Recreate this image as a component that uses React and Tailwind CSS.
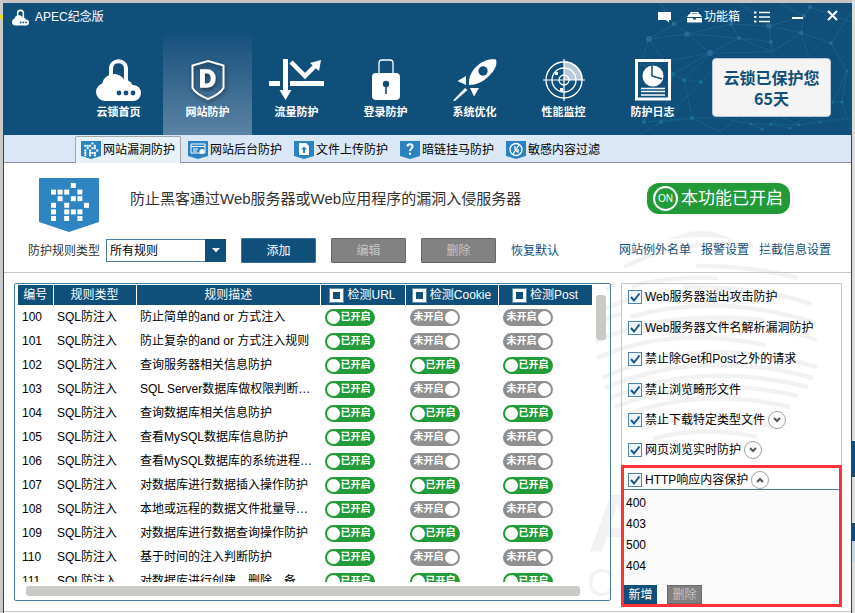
import React, { useState } from 'react'

const NAV = [
    { label: '云锁首页', icon: CloudLock },
    { label: '网站防护', icon: ShieldD },
    { label: '流量防护', icon: Flow },
    { label: '登录防护', icon: Padlock },
    { label: '系统优化', icon: Rocket },
    { label: '性能监控', icon: Radar },
    { label: '防护日志', icon: Report },
]

const TABS = [
    { label: '网站漏洞防护', icon: <PixelGlyph /> },
    {
        label: '网站后台防护',
        icon: (
            <>
                <path d="M3 3H17V12H3Z" fill="none" stroke="#fff" strokeWidth="1" />
                <path d="M3 5.500H17M5 8H10M5 10H9" stroke="#fff" strokeWidth="1" />
                <circle cx="14" cy="10.500" r="2.500" fill="#fff" />
            </>
        ),
    },
    {
        label: '文件上传防护',
        icon: (
            <>
                <path d="M5 2H12L15 5V14H5Z" fill="#fff" />
                <path d="M10 5.500L7 8.500H9V12H11V8.500H13Z" fill="#2b82c1" />
            </>
        ),
    },
    {
        label: '暗链挂马防护',
        icon: (
            <>
                <path d="M7.500 5.500C7.500 2.500 12.500 2.500 12.500 5.500C12.500 8 10 7.500 10 10" fill="none" stroke="#fff" strokeWidth="2" />
                <circle cx="10" cy="12.700" r="1.200" fill="#fff" />
            </>
        ),
    },
    {
        label: '敏感内容过滤',
        icon: (
            <>
                <circle cx="10" cy="8.500" r="6" fill="none" stroke="#fff" strokeWidth="1.300" />
                <path d="M13 4L7 13M9 5V9L12 11V8" fill="none" stroke="#fff" strokeWidth="1.300" />
            </>
        ),
    },
]

const RULES = [
    [100, '防止简单的and or 方式注入', true, false, false],
    [101, '防止复杂的and or 方式注入规则', true, false, false],
    [102, '查询服务器相关信息防护', true, true, true],
    [103, 'SQL Server数据库做权限判断的防护', true, false, false],
    [104, '查询数据库相关信息防护', true, true, true],
    [105, '查看MySQL数据库信息防护', true, false, false],
    [106, '查看MySQL数据库的系统进程的防护', true, false, false],
    [107, '对数据库进行数据插入操作防护', true, true, true],
    [108, '本地或远程的数据文件批量导入防护', true, false, false],
    [109, '对数据库进行数据查询操作防护', true, true, true],
    [110, '基于时间的注入判断防护', true, false, false],
    [111, '对数据库进行创建，删除，备', true, true, true],
]

const OPTIONS = ['Web服务器溢出攻击防护', 'Web服务器文件名解析漏洞防护', '禁止除Get和Post之外的请求', '禁止浏览畸形文件']
const MORE_OPTIONS = ['禁止下载特定类型文件', '网页浏览实时防护']
const CODES = [400, 403, 500, 404]

function CloudLock({ className = 'w-[45px] h-[42px]' }) {
    return (
        <svg className={className} viewBox="0 0 45 42">
            <path d="M15 24V10C15 -0.500 30 -0.500 30 10V24" fill="none" stroke="#fff" strokeWidth="4" />
            <g fill="#fff">
                <circle cx="9" cy="33" r="9" />
                <circle cx="18" cy="27" r="12" />
                <circle cx="29" cy="29" r="8" />
                <circle cx="37" cy="34" r="8" />
                <rect x="9" y="28" width="28" height="14" />
            </g>
            <g fill="#114f7b">
                <circle cx="23" cy="34" r="2.400" />
                <circle cx="30" cy="34" r="2.400" />
                <circle cx="37" cy="34" r="2.400" />
            </g>
        </svg>
    )
}

function ShieldD() {
    return (
        <svg className="w-[45px] h-[42px] drop-shadow-[1px_2px_2px_rgba(0,0,0,0.5)]" viewBox="0 0 45 42">
            <path d="M23 2L38.500 6.500V29Q35 35 23 40Q11 35 7.500 29V6.500Z" fill="none" stroke="#fff" strokeWidth="2" />
            <text x="22.500" y="28" textAnchor="middle" fill="#fff" stroke="#fff" strokeWidth="1.500" fontSize="23" fontWeight="700" fontFamily="Liberation Sans">D</text>
        </svg>
    )
}

function Flow() {
    return (
        <svg className="w-[55px] h-[42px]" viewBox="0 0 55 42">
            <g fill="#fff">
                <path d="M14 0H19V31H22.500L16.500 41L10.500 31H14Z" />
                <path d="M0 22H11V27H0ZM21 22H55V27H21Z" />
                <path d="M52 1L50 12L41 4Z" />
            </g>
            <path d="M22 3L36 17L47 6" fill="none" stroke="#fff" strokeWidth="4.500" />
        </svg>
    )
}

function Padlock() {
    return (
        <svg className="w-[28px] h-[42px]" viewBox="0 0 28 42">
            <path d="M7 15V4Q7 1 10 1H18Q21 1 21 4V15" fill="none" stroke="#fff" strokeWidth="1.300" />
            <rect y="14" width="28" height="27" rx="4" fill="#fff" />
            <circle cx="14" cy="25" r="3.200" fill="#114f7b" />
            <path d="M14 26V35" stroke="#114f7b" strokeWidth="1.600" />
        </svg>
    )
}

function Rocket() {
    return (
        <svg className="w-[44px] h-[42px]" viewBox="0 0 44 42">
            <path fill="#fff" d="M43 0.500C36 -0.500 29 2 23 8C18 13 15.500 19 16 26C23 26 30 23 36 17C42 11 44.500 6 43 0.500Z" />
            <circle cx="30" cy="12" r="4.700" fill="#114f7b" />
            <path fill="#fff" d="M4.500 22L13 17V26ZM17 29H26L21 37.500ZM0 41.500L12 29L14.500 31L2 42Z" />
        </svg>
    )
}

function Radar() {
    return (
        <svg className="w-[42px] h-[42px]" viewBox="0 0 42 42">
            <path d="M21 21V2A19 19 0 0 1 40 21Z" fill="#fff" opacity="0.700" />
            <g fill="none" stroke="#fff" strokeWidth="1.300">
                <circle cx="21" cy="21" r="18" />
                <circle cx="21" cy="21" r="12" />
                <circle cx="21" cy="21" r="5" />
                <path d="M21 0V42M0 21H42" strokeWidth="1.200" />
            </g>
            <path d="M12 13H15V16H12ZM17 29H20V32H17Z" fill="#fff" />
        </svg>
    )
}

function Report() {
    return (
        <svg className="w-[36px] h-[42px]" viewBox="0 0 36 42">
            <path d="M1.500 1.500H34.500V40H1.500Z" fill="none" stroke="#fff" strokeWidth="3" />
            <circle cx="18" cy="17" r="10.500" fill="#fff" />
            <path d="M17 6V17L27 20" fill="none" stroke="#114f7b" strokeWidth="1.500" />
            <path d="M6 29.500H30M6 32.500H30M6 36H30" stroke="#fff" strokeWidth="1.500" />
        </svg>
    )
}

const PIXELS = [[3, 0], [0, 1], [1, 1], [2, 1], [4, 1], [1, 2], [3, 2], [4, 2], [0, 3], [2, 3], [5, 3], [0, 4], [2, 4], [3, 4], [4, 4], [0, 5], [2, 5], [4, 5]]

function PixelGlyph() {
    return (
        <g transform="translate(-1 0) scale(0.36)" fill="#fff">
            {PIXELS.map(([x, y]) => (
                <rect key={`${x}-${y}`} x={12 + x * 6.6} y={4 + y * 6.6} width="5.6" height="5.6" />
            ))}
        </g>
    )
}

function Network() {
    return (
        <svg className="absolute right-0 top-0 w-[211px] h-[132px]" viewBox="640 3 211 132">
            <g fill="none" strokeWidth="0.800">
                <path stroke="#235f8c" d="M649 39L674 24L687 34L739 38L731 24L769 26L801 33L831 43L847 71M674 24L700 8L731 24L687 34L710 53L739 38L771 42L769 26L804 16L801 33L772 52L771 42M804 16L810 7L851 22M801 33L820 90M831 43L851 12M649 39L640 66L710 53L772 52M687 34L649 39L673 74M739 38L772 52M769 26L740 3M674 24L660 3M804 16L780 3" />
                <path stroke="#17638a" d="M673 74L710 53L684 80L673 74L661 122L701 82L684 80L692 118L644 122L673 74M701 82L712 70M692 118L720 118L751 124L771 124L799 125L820 122L833 102L842 102L847 71L833 102M842 102L851 130M799 125L780 116L771 124L762 129L751 124L740 116L720 132L692 118L661 122L640 134M820 122L806 116L790 128L771 124M820 122L851 118" />
            </g>
            <g fill="#2b689c">
                <circle cx="649" cy="39" r="3" />
                <circle cx="674" cy="24" r="2.300" />
                <circle cx="687" cy="34" r="2.600" />
                <circle cx="739" cy="38" r="2" />
                <circle cx="731" cy="24" r="2" />
                <circle cx="769" cy="26" r="2.800" />
                <circle cx="801" cy="33" r="2" />
                <circle cx="831" cy="43" r="2" />
                <circle cx="804" cy="16" r="2" />
                <circle cx="810" cy="7" r="2" />
                <circle cx="771" cy="42" r="2" />
                <circle cx="710" cy="53" r="3" />
            </g>
            <g fill="#15728f">
                <circle cx="673" cy="74" r="2" />
                <circle cx="684" cy="80" r="2" />
                <circle cx="701" cy="82" r="2" />
                <circle cx="692" cy="118" r="2" />
                <circle cx="644" cy="122" r="2" />
                <circle cx="661" cy="122" r="2" />
                <circle cx="751" cy="124" r="1.600" />
                <circle cx="771" cy="124" r="1.600" />
                <circle cx="799" cy="125" r="1.600" />
                <circle cx="790" cy="128" r="1.600" />
                <circle cx="762" cy="129" r="1.600" />
                <circle cx="820" cy="122" r="1.600" />
                <circle cx="833" cy="102" r="1.600" />
                <circle cx="842" cy="102" r="1.600" />
                <circle cx="847" cy="71" r="1.600" />
            </g>
        </svg>
    )
}

function Watermark() {
    return (
        <div aria-hidden="true" className="absolute right-0 top-0 w-[271px] h-[448px] overflow-hidden text-[#f2f2f2]">
            <svg className="absolute inset-0 w-[271px] h-[448px]" viewBox="580 163 271 448">
                <path d="M668 240Q700 222 734 240Q700 234 668 240Z" fill="currentColor" />
                <g fill="none" stroke="currentColor" strokeWidth="4.500">
                    <path d="M624 267Q680 238 753 246" />
                    <path d="M696 266Q750 265 798 278" />
                    <path d="M632 286Q670 276 718 278" />
                    <path d="M683 287Q760 286 811 304" />
                    <path d="M606 308Q660 284 730 296" />
                    <path d="M606 290L616 284" />
                    <path d="M630 317Q720 292 815 323" />
                    <path d="M600 322Q610 316 622 314" />
                    <path d="M596 342Q660 310 765 320" />
                    <path d="M635 333Q740 312 817 340" />
                    <path d="M597 358Q670 325 765 345" />
                    <path d="M602 378Q700 333 817 367" />
                    <path d="M605 388Q700 347 813 378" />
                    <path d="M610 398Q700 360 808 387" />
                    <path d="M615 407Q700 373 798 396" />
                    <path d="M624 416Q700 386 790 407" />
                    <path d="M641 429Q705 404 773 428" />
                    <path d="M653 439Q700 425 757 437" />
                </g>
                <text x="588" y="551" fontSize="82" fontWeight="700" fill="currentColor">A</text>
                <text x="587" y="596" fontSize="38" fill="currentColor">C</text>
            </svg>
        </div>
    )
}

function TitleBar() {
    return (
        <div className="relative h-[28px] pl-[8px] pr-[13px] flex items-center text-white">
            <CloudLock className="w-[17px] h-[17px]" />
            <h1 className="ml-[6px]">APEC纪念版</h1>
            <div className="ml-auto flex items-center">
                <button aria-label="消息" className="mr-[16px]">
                    <svg className="w-[13px] h-[12px]" viewBox="0 0 13 12">
                        <path d="M0 1H13V9H11V11.500L8 9H0Z" fill="#fff" />
                    </svg>
                </button>
                <button className="flex items-center gap-[2px] mr-[14px]">
                    <svg className="w-[15px] h-[11px]" viewBox="0 0 15 11">
                        <path d="M4 2V0.700H11V2" fill="none" stroke="#fff" strokeWidth="1.400" />
                        <path d="M2 2H13L15 5H0ZM0 6H15V10.500H0Z" fill="#fff" />
                        <path d="M6 5H9V7.500H6Z" fill="#114f7b" />
                    </svg>
                    功能箱
                </button>
                <button aria-label="菜单" className="mr-[22px]">
                    <svg className="w-[16px] h-[12px]" viewBox="0 0 16 12">
                        <path d="M5 1.500H16M5 6H16M5 10.500H16" stroke="#fff" strokeWidth="1.300" />
                        <path d="M0 0.500H2.500V2.500H0ZM0 5H2.500V7H0ZM0 9.500H2.500V11.500H0Z" fill="#fff" />
                    </svg>
                </button>
                <button aria-label="最小化" className="mr-[24px]">
                    <svg className="w-[11px] h-[10px]" viewBox="0 0 11 10">
                        <path d="M0 6H11" stroke="#fff" strokeWidth="2" />
                    </svg>
                </button>
                <button aria-label="关闭">
                    <svg className="w-[11px] h-[14px]" viewBox="0 0 11 14">
                        <path d="M1 1L10 10M10 1L1 10" stroke="#fff" strokeWidth="2" />
                    </svg>
                </button>
            </div>
        </div>
    )
}

function Toggle({ initial, label }) {
    const [on, setOn] = useState(initial)
    return (
        <button
            role="switch"
            aria-checked={on}
            aria-label={label}
            onClick={() => setOn(!on)}
            className={`w-[50px] h-[17px] px-[2px] rounded-full flex items-center gap-[1px] text-[10px] leading-[16px] font-bold text-white whitespace-nowrap ${on ? 'bg-[#229a38]' : 'flex-row-reverse bg-[#8f8f8f]'}`}
        >
            <span className="w-[13px] h-[13px] shrink-0 rounded-full bg-white" />
            <span>{on ? '已开启' : '未开启'}</span>
        </button>
    )
}

function HeadCheck({ label }) {
    return (
        <label className="flex items-center justify-center gap-[4px]">
            <input type="checkbox" className="appearance-none w-[13px] h-[13px] bg-[#114f7b] border-[3px] border-white outline outline-[#5d8db0]" />
            {label}
        </label>
    )
}

function Check({ label }) {
    return (
        <label className="flex items-center gap-[3px]">
            <span className="relative w-[14px] h-[14px]">
                <input type="checkbox" defaultChecked className="peer block appearance-none w-[14px] h-[14px] border border-[#4f86b0] bg-[#eef5fb]" />
                <svg className="absolute inset-0 w-[14px] h-[14px] pointer-events-none hidden peer-checked:block" viewBox="0 0 14 14">
                    <path d="M3 7L6 10.500L11.500 3.500" fill="none" stroke="#16568a" strokeWidth="2" />
                </svg>
            </span>
            {label}
        </label>
    )
}

function Expander({ open, label }) {
    return (
        <button aria-label={label} aria-expanded={open} className="w-[18px] h-[18px] rounded-full border border-[#a0a0a0] bg-white flex items-center justify-center">
            <svg className="w-[8px] h-[6px]" viewBox="0 0 8 6">
                <path d={open ? 'M1 5L4 2L7 5' : 'M1 1L4 4L7 1'} fill="none" stroke="#555" strokeWidth="2" />
            </svg>
        </button>
    )
}

function RuleTable() {
    return (
        <section className="flex-1 min-w-0 self-start border border-[#4c7fa8] rounded-[2px] pt-[1px] pb-[4px] pl-[3px] pr-[4px]">
            <div className="flex gap-[3px]">
                <div className="flex-1 h-[297px] overflow-hidden">
                    <table className="w-full table-fixed border-collapse">
                        <colgroup>
                            <col className="w-[35px]" />
                            <col className="w-[83px]" />
                            <col />
                            <col className="w-[85px]" />
                            <col className="w-[93px]" />
                            <col className="w-[94px]" />
                        </colgroup>
                        <thead className="bg-[#114f7b] text-white">
                            <tr className="h-[20px] [&>th]:font-normal [&>th]:p-0 [&>th]:border-r [&>th]:border-white">
                                <th>编号</th>
                                <th>规则类型</th>
                                <th>规则描述</th>
                                <th><HeadCheck label="检测URL" /></th>
                                <th><HeadCheck label="检测Cookie" /></th>
                                <th><HeadCheck label="检测Post" /></th>
                            </tr>
                        </thead>
                        <tbody>
                            {RULES.map(([id, desc, url, cookie, post]) => (
                                <tr key={id} className="h-[24px] [&>td]:py-0 [&>td]:pr-0 [&>td]:pl-[4px]">
                                    <td>{id}</td>
                                    <td>SQL防注入</td>
                                    <td>
                                        <div className="w-[176px] truncate">{desc}</div>
                                    </td>
                                    <td><Toggle initial={url} label={`${id} URL`} /></td>
                                    <td><Toggle initial={cookie} label={`${id} Cookie`} /></td>
                                    <td><Toggle initial={post} label={`${id} Post`} /></td>
                                </tr>
                            ))}
                        </tbody>
                    </table>
                </div>
                <div className="w-[10px] pt-[10px]">
                    <div className="h-[45px] rounded-[3px] bg-[#cac9c5]" />
                </div>
            </div>
            <div className="mt-[4px] ml-[8px] mr-[26px] h-[10px] rounded-[3px] bg-[#cac9c5]" />
        </section>
    )
}

function OptionPanel() {
    return (
        <aside className="w-[221px] shrink-0">
            <div className="border border-b-0 border-[#c4c7cc] pt-[4px] pb-[6px] pl-[6px] flex flex-col gap-[12px]">
                <div className="flex flex-col gap-[13px]">
                    {OPTIONS.map((label) => (
                        <div key={label} className="h-[18px] flex items-center">
                            <Check label={label} />
                        </div>
                    ))}
                </div>
                {MORE_OPTIONS.map((label) => (
                    <div key={label} className="h-[18px] flex items-center gap-[3px]">
                        <Check label={label} />
                        <Expander open={false} label={`展开${label}`} />
                    </div>
                ))}
            </div>
            <div className="border-[3px] border-[#fb3338] bg-[#fafafa]">
                <div className="h-[22px] pt-[3px] pl-[4px] flex gap-[3px] items-center bg-white border-b border-[#4c7fa8]">
                    <Check label="HTTP响应内容保护" />
                    <Expander open label="收起HTTP响应内容保护" />
                </div>
                <ul className="pt-[3px] pl-[2px] leading-[21px]">
                    {CODES.map((code) => (
                        <li key={code}>{code}</li>
                    ))}
                </ul>
                <div className="mt-[8px] flex gap-[10px] leading-[20px]">
                    <button className="w-[33px] h-[19px] bg-[#114f7b] text-white">新增</button>
                    <button className="w-[35px] h-[19px] bg-[#808080] border border-[#6b6b6b] text-[#c4c4c4] leading-[18px]">删除</button>
                </div>
            </div>
        </aside>
    )
}

export default function App() {
    const [tab, setTab] = useState(0)

    return (
        <div className="min-h-screen flex bg-[#d8d8d8] text-[12px] leading-[18px] text-black font-['Liberation_Sans','Noto_Sans_CJK_SC',sans-serif]">
            <div className="w-[3px] bg-[#c9c9c9] pt-[15px]">
                <div className="h-[4px] bg-[#e8e000]" />
            </div>

            <div className="flex-1 min-w-0 flex flex-col">
                <div className="h-[3px] bg-[#c8c5c0]" />
                <div className="flex-1 border-x border-[#114f7b] bg-white">
                    <header className="relative bg-[#114f7b]">
                        <Network />
                        <TitleBar />
                        <div className="relative flex justify-between pl-[70px] pr-[20px]">
                            <nav className="flex">
                                {NAV.map(({ label, icon: Icon }, i) => (
                                    <a
                                        key={label}
                                        href="#"
                                        className={`w-[89px] h-[104px] pt-[28px] flex flex-col items-center gap-[2px] text-white text-[11px] leading-[18px] font-bold ${i === 1 ? 'bg-linear-to-b from-[#114f7b] to-[#5a83a4]' : ''}`}
                                    >
                                        <Icon />
                                        {label}
                                    </a>
                                ))}
                            </nav>
                            <div className="mt-[27px] w-[119px] h-[59px] rounded-[4px] border border-[#b9c8d6] bg-[#f4f4f4] flex flex-col items-center justify-center text-[16px] leading-[21px] font-bold text-[#114f7b] font-['Noto_Sans_CJK_SC',sans-serif]">
                                <span>云锁已保护您</span>
                                <span>65天</span>
                            </div>
                        </div>
                    </header>

                    <div className="h-[28px] pl-[71px] pt-[1px] flex bg-[#d9e7f6] border-b border-[#8b8fa0]">
                        {TABS.map(({ label, icon }, i) => (
                            <button
                                key={label}
                                onClick={() => setTab(i)}
                                className={`w-[106px] h-[27px] flex items-center gap-[2px] border border-b-0 rounded-t-[2px] ${i === tab ? 'pl-[5px] bg-[#e8f2fa] border-[#a6a6a6]' : 'pl-[6px] border-transparent'}`}
                            >
                                <svg className="w-[20px] h-[18px]" viewBox="0 0 20 18">
                                    <path d="M0 0H20V15L10 18L0 15Z" fill="#2b82c1" />
                                    {icon}
                                </svg>
                                {label}
                            </button>
                        ))}
                    </div>

                    <div className="relative">
                        <Watermark />
                        <div className="relative pt-[15px] pb-[9px] border-b border-[#c4c7cf]">
                            <div className="flex items-start pl-[35px] pr-[61px]">
                                <svg className="w-[60px] h-[54px]" viewBox="0 0 60 54">
                                    <path d="M0 0H60V44L30 54L0 44Z" fill="#2f84c2" />
                                    <g fill="#fff">
                                        {PIXELS.map(([x, y]) => (
                                            <rect key={`${x}-${y}`} x={12 + x * 6.6} y={5 + y * 6.6} width="5" height="5" />
                                        ))}
                                    </g>
                                </svg>
                                <div className="flex-1 h-[41px] pl-[31px] flex items-center justify-between">
                                    <p className="text-[15px] text-[#333]">防止黑客通过Web服务器或Web应用程序的漏洞入侵服务器</p>
                                    <button className="w-[143px] h-[31px] pl-[6px] rounded-[12px] bg-[#229a38] text-white flex items-center gap-[3px] text-[17px]">
                                        <span className="w-[25px] h-[25px] rounded-full border-2 border-white text-[10px] leading-[21px]">ON</span>
                                        本功能已开启
                                    </button>
                                </div>
                            </div>

                            <div className="mt-[6px] pl-[24px] pr-[20px] flex items-center">
                                <label htmlFor="rule-type" className="leading-[20px] text-[#333]">防护规则类型</label>
                                <div className="relative ml-[6px] w-[120px] h-[23px]">
                                    <select id="rule-type" className="appearance-none w-full h-full pl-[3px] bg-white border border-[#4c7fa8]">
                                        <option>所有规则</option>
                                    </select>
                                    <span className="absolute right-0 top-0 w-[21px] h-[23px] bg-[#114f7b] flex items-center justify-center pointer-events-none">
                                        <svg className="w-[8px] h-[5px]" viewBox="0 0 8 5">
                                            <path d="M0 0H8L4 4.500Z" fill="#fff" />
                                        </svg>
                                    </span>
                                </div>
                                <div className="h-[25px] ml-[15px] flex gap-[15px]">
                                    <button className="w-[75px] h-[25px] rounded-[1px] border border-[#3c719a] bg-[#114f7b] text-white">添加</button>
                                    <button className="w-[75px] h-[25px] rounded-[1px] border border-[#666] bg-[#828282] text-[#c6c6c6]">编辑</button>
                                    <button className="w-[75px] h-[25px] rounded-[1px] border border-[#666] bg-[#828282] text-[#c6c6c6]">删除</button>
                                    <a href="#" className="leading-[27px] text-[#114f7b]">恢复默认</a>
                                </div>
                                <div className="ml-auto self-start flex gap-[10px] leading-[24px] text-[#114f7b]">
                                    <a href="#">网站例外名单</a>
                                    <a href="#">报警设置</a>
                                    <a href="#">拦截信息设置</a>
                                </div>
                            </div>
                        </div>

                        <main className="relative flex gap-[10px] pt-[10px] pb-[4px] pl-[10px] pr-[9px] border-b border-[#c4c4c4]">
                            <RuleTable />
                            <OptionPanel />
                        </main>
                    </div>
                </div>
            </div>

            <div className="w-[3px] flex flex-col bg-[#dcdcdc]">
                <div className="h-[441px]" />
                <div className="h-[36px] bg-[#114f7b]" />
                <div className="h-[46px]" />
                <div className="h-[18px] bg-[#114f7b]" />
                <div className="h-[20px] bg-[#c3d6e8]" />
            </div>
        </div>
    )
}
